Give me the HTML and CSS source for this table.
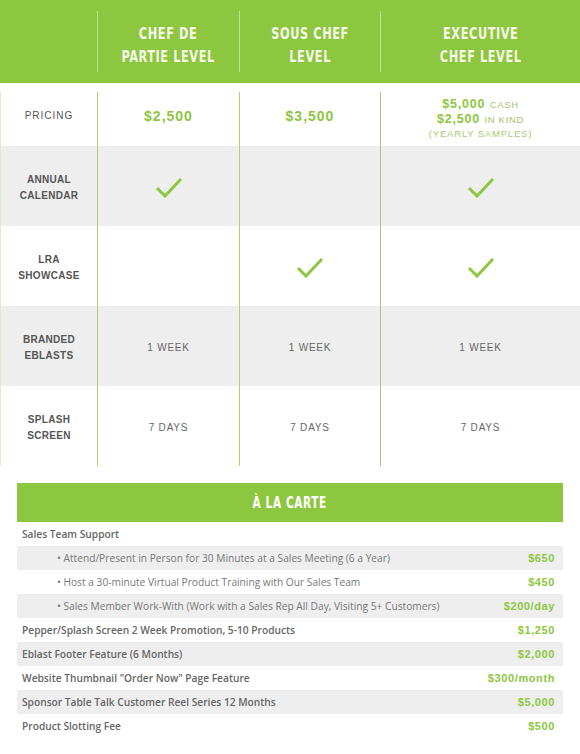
FILE: index.html
```html
<!DOCTYPE html>
<html lang="en">
<head>
<meta charset="utf-8">
<title>Sponsorship Levels</title>
<link rel="stylesheet" href="styles.css">
</head>
<body>
<div class="plans">
  <div class="plan-head">
    <div class="h-cell"></div>
    <div class="h-cell"><span class="h-text">CHEF DE<br>PARTIE LEVEL</span></div>
    <div class="h-cell"><span class="h-text">SOUS CHEF<br>LEVEL</span></div>
    <div class="h-cell"><span class="h-text">EXECUTIVE<br>CHEF LEVEL</span></div>
  </div>
  <div class="plan-body">
    <div class="row row-price">
      <div class="cell label light">PRICING</div>
      <div class="cell price">$2,500</div>
      <div class="cell price">$3,500</div>
      <div class="cell price-multi">
        <div><span class="amt">$5,000</span> <span class="unit">CASH</span></div>
        <div><span class="amt">$2,500</span> <span class="unit">IN KIND</span></div>
        <div class="note">(YEARLY SAMPLES)</div>
      </div>
    </div>
    <div class="row alt">
      <div class="cell label">ANNUAL<br>CALENDAR</div>
      <div class="cell"><svg class="check" viewBox="0 0 28 21"><path d="M2 11 L10 19 L26 2"/></svg></div>
      <div class="cell"></div>
      <div class="cell"><svg class="check" viewBox="0 0 28 21"><path d="M2 11 L10 19 L26 2"/></svg></div>
    </div>
    <div class="row">
      <div class="cell label">LRA<br>SHOWCASE</div>
      <div class="cell"></div>
      <div class="cell"><svg class="check" viewBox="0 0 28 21"><path d="M2 11 L10 19 L26 2"/></svg></div>
      <div class="cell"><svg class="check" viewBox="0 0 28 21"><path d="M2 11 L10 19 L26 2"/></svg></div>
    </div>
    <div class="row alt">
      <div class="cell label">BRANDED<br>EBLASTS</div>
      <div class="cell val">1 WEEK</div>
      <div class="cell val">1 WEEK</div>
      <div class="cell val">1 WEEK</div>
    </div>
    <div class="row">
      <div class="cell label">SPLASH<br>SCREEN</div>
      <div class="cell val">7 DAYS</div>
      <div class="cell val">7 DAYS</div>
      <div class="cell val">7 DAYS</div>
    </div>
  </div>
</div>

<section class="carte">
  <h2 class="carte-title"><span class="carte-text">À LA CARTE</span></h2>
  <ul class="carte-list">
    <li class="item group"><span class="name">Sales Team Support</span></li>
    <li class="item sub alt"><span class="name">• Attend/Present in Person for 30 Minutes at a Sales Meeting (6 a Year)</span><span class="cost">$650</span></li>
    <li class="item sub"><span class="name">• Host a 30-minute Virtual Product Training with Our Sales Team</span><span class="cost">$450</span></li>
    <li class="item sub alt"><span class="name">• Sales Member Work-With (Work with a Sales Rep All Day, Visiting 5+ Customers)</span><span class="cost">$200/day</span></li>
    <li class="item"><span class="name">Pepper/Splash Screen 2 Week Promotion, 5-10 Products</span><span class="cost">$1,250</span></li>
    <li class="item alt"><span class="name">Eblast Footer Feature (6 Months)</span><span class="cost">$2,000</span></li>
    <li class="item"><span class="name">Website Thumbnail "Order Now" Page Feature</span><span class="cost">$300/month</span></li>
    <li class="item alt"><span class="name">Sponsor Table Talk Customer Reel Series 12 Months</span><span class="cost">$5,000</span></li>
    <li class="item"><span class="name">Product Slotting Fee</span><span class="cost">$500</span></li>
  </ul>
</section>
</body>
</html>
```
FILE: styles.css
```css
* { box-sizing: border-box; }
html, body { margin: 0; padding: 0; background: #fff; }
body { font-family: "Liberation Sans", Arial, sans-serif; width: 580px; }

.plan-head {
  display: grid;
  grid-template-columns: 97px 142px 141px 1fr;
  background: #8dc63f;
  height: 83px;
  padding: 11px 0;
}
.h-cell {
  display: flex;
  align-items: center;
  justify-content: center;
  text-align: center;
  padding-top: 8px;
  border-left: 1px solid rgba(255,255,255,0.45);
}
.h-cell:first-child { border-left: 0; }
.h-text {
  display: inline-block;
  white-space: nowrap;
  color: #f5f8e8;
  font-family: "DejaVu Sans Condensed", "DejaVu Sans", sans-serif;
  font-weight: 700;
  font-size: 16px;
  line-height: 22.5px;
  letter-spacing: 0.7px;
  transform: scaleX(0.79);
}

.plan-body { padding-top: 9px; }
.row {
  display: grid;
  grid-template-columns: 97px 142px 141px 1fr;
  height: 80px;
}
.row-price { height: 54px; }
.row.alt { background: #eeeeee; }
.cell {
  display: flex;
  align-items: center;
  justify-content: center;
  text-align: center;
  padding-top: 3px;
  border-left: 1px solid #a9d470;
}
.row-price .cell { padding-top: 0; padding-bottom: 6px; }
.cell:first-child { border-left-color: #dcefc4; }
.cell:nth-child(4) { border-left-color: #b7bb8c; }

.label {
  font-size: 10px;
  line-height: 16px;
  font-weight: 700;
  letter-spacing: 0.3px;
  color: #555;
}
.label.light { font-weight: 400; color: #555; letter-spacing: 1px; }
.val {
  font-size: 10px;
  letter-spacing: 0.8px;
  color: #666;
}
.price {
  color: #8dc63f;
  font-weight: 700;
  font-size: 14px;
  letter-spacing: 1px;
}
.row-price .price-multi { padding-bottom: 2px; }
.price-multi {
  flex-direction: column;
  line-height: 13.5px;
}
.amt { color: #8dc63f; font-weight: 700; font-size: 12.5px; letter-spacing: 0.8px; }
.unit { color: #9cc466; font-size: 9.5px; letter-spacing: 0.7px; }
.note { color: #a5cc72; font-size: 9.5px; letter-spacing: 0.8px; }

.check { width: 28px; height: 21px; }
.check path {
  fill: none;
  stroke: #8dc63f;
  stroke-width: 3;
  stroke-linecap: butt;
  stroke-linejoin: miter;
}

.carte { margin: 17px 17px 0; }
.carte-title {
  margin: 0;
  height: 39px;
  background: #8dc63f;
  display: flex;
  align-items: center;
  justify-content: center;
}
.carte-text {
  display: inline-block;
  color: #fff;
  font-family: "DejaVu Sans Condensed", "DejaVu Sans", sans-serif;
  font-weight: 700;
  font-size: 15px;
  letter-spacing: 0.8px;
  transform: scaleX(0.78);
}
.carte-list { list-style: none; margin: 0; padding: 0; }
.item {
  display: flex;
  align-items: center;
  justify-content: space-between;
  height: 24px;
  padding: 0 8px 0 5px;
  font-family: "Open Sans", sans-serif;
  font-size: 10.2px;
  font-weight: 600;
  color: #666;
}
.item.alt { background: #eeeeee; }
.item.sub { padding-left: 40px; font-weight: 400; color: #777; }
.cost {
  font-family: "Liberation Sans", Arial, sans-serif;
  font-weight: 700;
  font-size: 11px;
  letter-spacing: 0.6px;
  color: #8dc63f;
}
```
